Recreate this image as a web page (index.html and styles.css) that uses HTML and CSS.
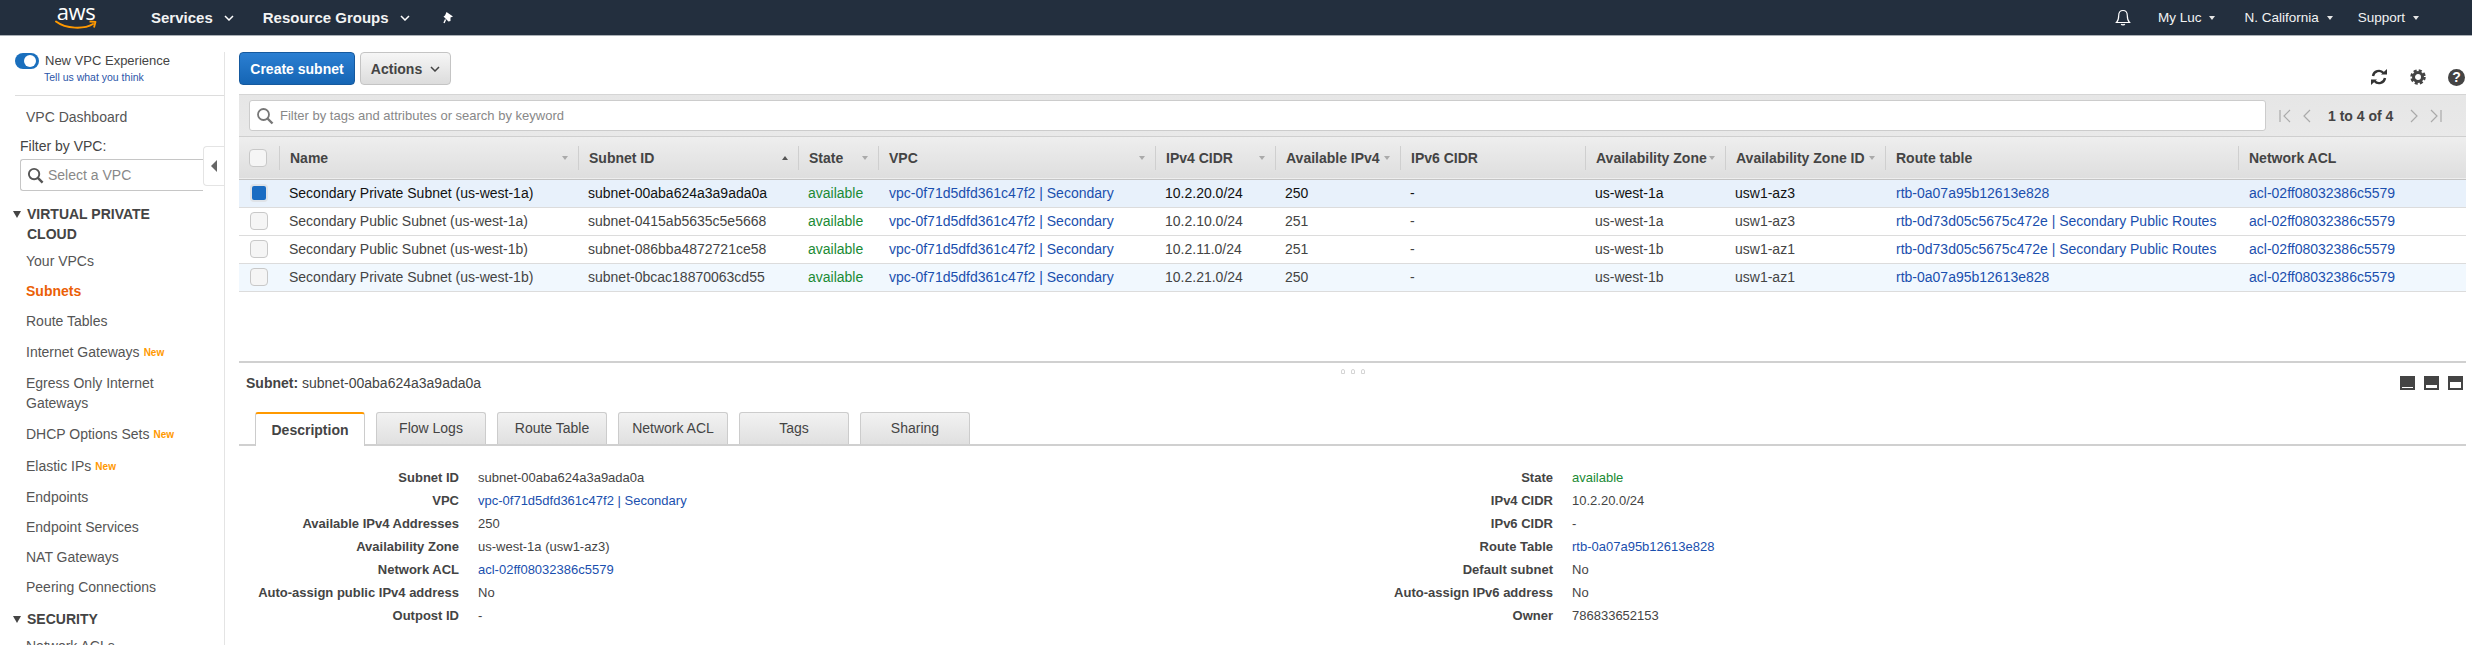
FILE: index.html
```html
<!DOCTYPE html>
<html lang="en">
<head>
    <meta charset="UTF-8">
    <title>Subnets | VPC Management Console</title>
    <link rel="stylesheet" href="styles.css">
</head>
<body>

    <!-- top bar -->
    <header class="topbar">
        <a class="logo" href="#">
            <span class="logo-text">aws</span>
            <svg class="logo-smile" viewBox="0 0 42 10" width="42" height="10"><path d="M1 1.5C11 9 29 9.500 38 4" fill="none" stroke="#f90" stroke-width="2" stroke-linecap="round"/><path d="M34.500 1.500L40.500 1.800L39 7.500" fill="none" stroke="#f90" stroke-width="1.800" stroke-linejoin="round"/></svg>
        </a>
        <a class="menu menu-services" href="#">Services<svg class="caret" viewBox="0 0 10 6" width="10" height="6"><path d="M1 1l4 4 4-4" fill="none" stroke="#fff" stroke-width="1.500"/></svg></a>
        <a class="menu menu-groups" href="#">Resource Groups<svg class="caret" viewBox="0 0 10 6" width="10" height="6"><path d="M1 1l4 4 4-4" fill="none" stroke="#fff" stroke-width="1.500"/></svg></a>
        <svg class="pin" viewBox="0 0 14 14" width="14" height="14"><path d="M5.500 1L12 5.500 9.500 6.500 9.500 10 7.500 10.500 2.500 5.500 4 4.500z" fill="#fff"/><path d="M4.500 8.500L3 12" stroke="#fff" stroke-width="1.400"/></svg>
        <div class="topbar-right">
            <svg class="bell" viewBox="0 0 18 18" width="18" height="18"><path d="M9 1.500c-3 0-4.300 2.300-4.300 5 0 3.500-.7 5.500-2.200 7h13c-1.500-1.500-2.200-3.500-2.200-7 0-2.700-1.300-5-4.300-5zM7.300 15c.3 1.200 3.100 1.200 3.400 0" fill="none" stroke="#fff" stroke-width="1.200"/></svg>
            <a class="menu-small menu-user" href="#">My Luc<span class="tiny-caret"></span></a>
            <a class="menu-small menu-region" href="#">N. California<span class="tiny-caret"></span></a>
            <a class="menu-small" href="#">Support<span class="tiny-caret"></span></a>
        </div>
    </header>

    <div class="page">

        <!-- left navigation -->
        <aside class="sidebar">
            <div class="experience">
                <div class="experience-row">
                    <span class="toggle"><span class="toggle-knob"></span></span>
                    <span>New VPC Experience</span>
                </div>
                <a class="feedback" href="#">Tell us what you think</a>
            </div>
            <a class="dashboard" href="#">VPC Dashboard</a>
            <div class="filter-label">Filter by VPC:</div>
            <div class="vpc-select">
                <svg viewBox="0 0 18 18" width="17" height="17"><circle cx="7.500" cy="7.500" r="5.500" fill="none" stroke="#555" stroke-width="2"/><path d="M11.500 11.500L16.500 16.500" stroke="#555" stroke-width="2.500"/></svg>
                <span>Select a VPC</span>
            </div>
            <div class="collapse-handle"><span class="collapse-arrow"></span></div>

            <div class="nav-heading"><span class="triangle"></span><span class="heading-text">VIRTUAL PRIVATE CLOUD</span></div>
            <ul class="nav-list">
                <li class="nav-item">Your VPCs</li>
                <li class="nav-item active">Subnets</li>
                <li class="nav-item">Route Tables</li>
                <li class="nav-item tall">Internet Gateways <span class="new">New</span></li>
                <li class="nav-item double">Egress Only Internet Gateways</li>
                <li class="nav-item tall">DHCP Options Sets <span class="new">New</span></li>
                <li class="nav-item tall">Elastic IPs <span class="new">New</span></li>
                <li class="nav-item">Endpoints</li>
                <li class="nav-item">Endpoint Services</li>
                <li class="nav-item">NAT Gateways</li>
                <li class="nav-item">Peering Connections</li>
            </ul>
            <div class="nav-heading security"><span class="triangle"></span><span class="heading-text">SECURITY</span></div>
            <ul class="nav-list">
                <li class="nav-item">Network ACLs</li>
            </ul>
        </aside>

        <main class="content">
            <div class="actions-bar">
                <button class="btn btn-primary">Create subnet</button>
                <button class="btn btn-default">Actions<svg class="caret" viewBox="0 0 10 6" width="10" height="6"><path d="M1 1l4 4 4-4" fill="none" stroke="#444" stroke-width="1.500"/></svg></button>
                <div class="tools">
                    <svg viewBox="0 0 18 18" width="18" height="18"><path d="M3 8a6 6 0 0 1 10.500-3M15 10a6 6 0 0 1-10.500 3" fill="none" stroke="#333" stroke-width="2.400"/><path d="M11 6.500h6V1zM7 11.500H1v5.500z" fill="#333"/></svg>
                    <svg viewBox="0 0 18 18" width="18" height="18"><circle cx="9" cy="9" r="4.500" fill="none" stroke="#444" stroke-width="3"/><circle cx="9" cy="9" r="6.500" fill="none" stroke="#444" stroke-width="2.500" stroke-dasharray="3 2.100"/></svg>
                    <span class="help">?</span>
                </div>
            </div>

            <div class="search-bar">
                <div class="search-box">
                    <svg viewBox="0 0 18 18" width="18" height="18"><circle cx="7.500" cy="7.500" r="5.500" fill="none" stroke="#777" stroke-width="1.800"/><path d="M11.500 11.500L16.500 16.500" stroke="#777" stroke-width="2.400"/></svg>
                    <span>Filter by tags and attributes or search by keyword</span>
                </div>
                <div class="pager">
                    <svg viewBox="0 0 14 14" width="14" height="14"><path d="M2 1v12M12 1L6 7l6 6" fill="none" stroke="#aaa" stroke-width="1.200"/></svg>
                    <svg viewBox="0 0 10 14" width="10" height="14"><path d="M8 1L2 7l6 6" fill="none" stroke="#aaa" stroke-width="1.200"/></svg>
                    <span class="pager-text">1 to 4 of 4</span>
                    <svg viewBox="0 0 10 14" width="10" height="14"><path d="M2 1l6 6-6 6" fill="none" stroke="#aaa" stroke-width="1.200"/></svg>
                    <svg viewBox="0 0 14 14" width="14" height="14"><path d="M12 1v12M2 1l6 6-6 6" fill="none" stroke="#aaa" stroke-width="1.200"/></svg>
                </div>
            </div>

            <div class="table-pane">
                <table class="grid">
                    <colgroup>
                        <col class="c-check"><col class="c-name"><col class="c-id"><col class="c-state"><col class="c-vpc"><col class="c-ipv4"><col class="c-avail"><col class="c-ipv6"><col class="c-az"><col class="c-azid"><col class="c-route"><col class="c-acl">
                    </colgroup>
                    <thead>
                        <tr>
                            <th><span class="check"></span></th>
                            <th><div class="th-in">Name<i class="sort"></i></div></th>
                            <th><div class="th-in">Subnet ID<i class="sort up"></i></div></th>
                            <th><div class="th-in">State<i class="sort"></i></div></th>
                            <th><div class="th-in">VPC<i class="sort"></i></div></th>
                            <th><div class="th-in">IPv4 CIDR<i class="sort"></i></div></th>
                            <th><div class="th-in">Available IPv4<i class="sort"></i></div></th>
                            <th><div class="th-in">IPv6 CIDR</div></th>
                            <th><div class="th-in">Availability Zone<i class="sort"></i></div></th>
                            <th><div class="th-in">Availability Zone ID<i class="sort"></i></div></th>
                            <th><div class="th-in">Route table</div></th>
                            <th><div class="th-in">Network ACL</div></th>
                        </tr>
                    </thead>
                    <tbody>
                        <tr class="selected">
                            <td><span class="check checked"></span></td>
                            <td>Secondary Private Subnet (us-west-1a)</td>
                            <td>subnet-00aba624a3a9ada0a</td>
                            <td class="ok">available</td>
                            <td class="link">vpc-0f71d5dfd361c47f2 | Secondary</td>
                            <td>10.2.20.0/24</td>
                            <td>250</td>
                            <td>-</td>
                            <td>us-west-1a</td>
                            <td>usw1-az3</td>
                            <td class="link">rtb-0a07a95b12613e828</td>
                            <td class="link">acl-02ff08032386c5579</td>
                        </tr>
                        <tr>
                            <td><span class="check"></span></td>
                            <td>Secondary Public Subnet (us-west-1a)</td>
                            <td>subnet-0415ab5635c5e5668</td>
                            <td class="ok">available</td>
                            <td class="link">vpc-0f71d5dfd361c47f2 | Secondary</td>
                            <td>10.2.10.0/24</td>
                            <td>251</td>
                            <td>-</td>
                            <td>us-west-1a</td>
                            <td>usw1-az3</td>
                            <td class="link">rtb-0d73d05c5675c472e | Secondary Public Routes</td>
                            <td class="link">acl-02ff08032386c5579</td>
                        </tr>
                        <tr>
                            <td><span class="check"></span></td>
                            <td>Secondary Public Subnet (us-west-1b)</td>
                            <td>subnet-086bba4872721ce58</td>
                            <td class="ok">available</td>
                            <td class="link">vpc-0f71d5dfd361c47f2 | Secondary</td>
                            <td>10.2.11.0/24</td>
                            <td>251</td>
                            <td>-</td>
                            <td>us-west-1b</td>
                            <td>usw1-az1</td>
                            <td class="link">rtb-0d73d05c5675c472e | Secondary Public Routes</td>
                            <td class="link">acl-02ff08032386c5579</td>
                        </tr>
                        <tr class="tinted">
                            <td><span class="check"></span></td>
                            <td>Secondary Private Subnet (us-west-1b)</td>
                            <td>subnet-0bcac18870063cd55</td>
                            <td class="ok">available</td>
                            <td class="link">vpc-0f71d5dfd361c47f2 | Secondary</td>
                            <td>10.2.21.0/24</td>
                            <td>250</td>
                            <td>-</td>
                            <td>us-west-1b</td>
                            <td>usw1-az1</td>
                            <td class="link">rtb-0a07a95b12613e828</td>
                            <td class="link">acl-02ff08032386c5579</td>
                        </tr>
                    </tbody>
                </table>
            </div>

            <!-- bottom panel -->
            <section class="detail-pane">
                <div class="split-dots"><i></i><i></i><i></i></div>
                <div class="detail-head">
                    <div><b>Subnet:</b> subnet-00aba624a3a9ada0a</div>
                    <div class="pane-icons">
                        <span class="pane-icon p1"></span>
                        <span class="pane-icon p2"></span>
                        <span class="pane-icon p3"></span>
                    </div>
                </div>
                <div class="tabs">
                    <a class="tab current" href="#">Description</a>
                    <a class="tab" href="#">Flow Logs</a>
                    <a class="tab" href="#">Route Table</a>
                    <a class="tab" href="#">Network ACL</a>
                    <a class="tab" href="#">Tags</a>
                    <a class="tab" href="#">Sharing</a>
                </div>
                <div class="details">
                    <dl class="detail-col">
                        <dt>Subnet ID</dt><dd>subnet-00aba624a3a9ada0a</dd>
                        <dt>VPC</dt><dd class="link">vpc-0f71d5dfd361c47f2 | Secondary</dd>
                        <dt>Available IPv4 Addresses</dt><dd>250</dd>
                        <dt>Availability Zone</dt><dd>us-west-1a (usw1-az3)</dd>
                        <dt>Network ACL</dt><dd class="link">acl-02ff08032386c5579</dd>
                        <dt>Auto-assign public IPv4 address</dt><dd>No</dd>
                        <dt>Outpost ID</dt><dd>-</dd>
                    </dl>
                    <dl class="detail-col">
                        <dt>State</dt><dd class="ok">available</dd>
                        <dt>IPv4 CIDR</dt><dd>10.2.20.0/24</dd>
                        <dt>IPv6 CIDR</dt><dd>-</dd>
                        <dt>Route Table</dt><dd class="link">rtb-0a07a95b12613e828</dd>
                        <dt>Default subnet</dt><dd>No</dd>
                        <dt>Auto-assign IPv6 address</dt><dd>No</dd>
                        <dt>Owner</dt><dd>786833652153</dd>
                    </dl>
                </div>
            </section>
        </main>
    </div>

</body>
</html>
```

FILE: styles.css
```css
html, body {
    margin: 0;
    padding: 0;
    height: 100%;
    overflow: hidden;
}

body {
    font-family: "Liberation Sans", Arial, sans-serif;
    font-size: 13px;
    color: #444;
    background-color: #fff;
}

a {
    color: inherit;
    text-decoration: none;
}

/* top bar */
.topbar {
    display: flex;
    align-items: center;
    height: 35px;
    border-bottom: 1px solid #aab0b6;
    background-color: #232f3e;
    color: #fff;
}

.logo {
    display: flex;
    flex-direction: column;
    align-items: center;
    width: 42px;
    margin-left: 55px;
    height: 35px;
}

.logo-text {
    font-family: "Open Sans", sans-serif;
    font-size: 22px;
    line-height: 20px;
    margin-top: 1px;
    letter-spacing: -0.5px;
}

.logo-smile {
    margin-top: -1px;
}

.menu {
    display: flex;
    align-items: center;
    font-size: 15px;
    font-weight: bold;
    color: #f2f3f3;
}

.menu .caret {
    margin-left: 11px;
}

.menu-services {
    margin-left: 54px;
}

.menu-groups {
    margin-left: 29px;
}

.pin {
    margin-left: 31px;
}

.topbar-right {
    display: flex;
    align-items: center;
    margin-left: auto;
    padding-right: 53px;
}

.bell {
    margin-right: 26px;
}

.menu-small {
    font-size: 13.500px;
    color: #f2f3f3;
}

.menu-user {
    margin-right: 29px;
}

.menu-region {
    margin-right: 25px;
}

.tiny-caret {
    display: inline-block;
    margin-left: 8px;
    vertical-align: 2px;
    border-left: 3.500px solid transparent;
    border-right: 3.500px solid transparent;
    border-top: 4px solid #e6e6e6;
}

/* sidebar */
.page {
    display: flex;
    height: 609px;
    overflow: hidden;
}

.sidebar {
    position: relative;
    flex: none;
    box-sizing: border-box;
    width: 225px;
    margin-top: 16px;
    border-right: 1px solid #e4e4e4;
    overflow: hidden;
    font-size: 14px;
    color: #555;
}

.experience {
    margin-left: 15px;
    height: 43px;
    border-bottom: 1px solid #ddd;
}

.experience-row {
    display: flex;
    align-items: center;
    gap: 6px;
    color: #444;
    font-size: 13px;
    line-height: 18px;
}

.toggle {
    display: block;
    box-sizing: border-box;
    width: 24px;
    height: 16px;
    padding: 2px 2px 2px 9px;
    border-radius: 8px;
    background-color: #1a6fbd;
}

.toggle-knob {
    display: block;
    width: 12px;
    height: 12px;
    border-radius: 50%;
    background-color: #fff;
}

.feedback {
    display: block;
    margin: 1px 0 0 29px;
    font-size: 10.500px;
    color: #2b55a8;
}

.dashboard {
    display: block;
    margin: 12px 0 0 26px;
    line-height: 18px;
}

.filter-label {
    margin: 11px 0 0 20px;
    line-height: 18px;
    color: #444;
}

.vpc-select {
    display: flex;
    align-items: center;
    gap: 4px;
    box-sizing: border-box;
    width: 183px;
    height: 32px;
    margin: 4px 0 0 20px;
    padding-left: 6px;
    border: 1px solid #c6c6c6;
    border-right: none;
    border-radius: 3px 0 0 3px;
    color: #888;
}

.collapse-handle {
    position: absolute;
    top: 94px;
    right: 0;
    display: flex;
    align-items: center;
    justify-content: center;
    box-sizing: border-box;
    width: 21px;
    height: 40px;
    border: 1px solid #e4e4e4;
    border-right: none;
    border-radius: 4px 0 0 4px;
    background-color: #fff;
}

.collapse-arrow {
    border-top: 6px solid transparent;
    border-bottom: 6px solid transparent;
    border-right: 6px solid #666;
}

.nav-heading {
    display: flex;
    gap: 6px;
    margin: 13px 8px 0 13px;
    font-size: 14px;
    font-weight: bold;
    line-height: 20px;
    color: #444;
}

.heading-text {
    max-width: 130px;
}

.nav-heading.security {
    margin-top: 7px;
}

.triangle {
    flex: none;
    width: 0;
    height: 0;
    margin-top: 7px;
    border-left: 4.500px solid transparent;
    border-right: 4.500px solid transparent;
    border-top: 7px solid #444;
}

.nav-list {
    list-style: none;
    margin: 0;
    padding: 2px 10px 0 26px;
}

.nav-item {
    display: flex;
    flex-wrap: wrap;
    align-items: center;
    gap: 0 4px;
    height: 30px;
    line-height: 20px;
}

.nav-item.tall {
    height: 32px;
}

.nav-item.double {
    height: 50px;
}

.nav-item.active {
    font-weight: bold;
    color: #eb5f07;
}

.new {
    font-size: 10px;
    font-weight: bold;
    color: #ff9900;
    margin-top: 2px;
}

/* main area */
.content {
    flex: 1;
    min-width: 0;
    margin: 0 6px 0 14px;
}

.actions-bar {
    display: flex;
    align-items: flex-start;
    gap: 5px;
    height: 58px;
    padding-top: 16px;
    box-sizing: border-box;
}

.btn {
    height: 33px;
    border-radius: 4px;
    font-family: inherit;
    font-size: 14px;
    font-weight: bold;
    padding: 0;
}

.btn-primary {
    width: 116px;
    border: 1px solid #15599e;
    background: linear-gradient(#2b7fd2, #1565b4);
    color: #fff;
}

.btn-default {
    display: flex;
    align-items: center;
    justify-content: center;
    gap: 8px;
    width: 91px;
    border: 1px solid #c4c4c4;
    background: linear-gradient(#f6f6f6, #dcdcdc);
    color: #444;
}

.tools {
    display: flex;
    align-items: center;
    gap: 21px;
    margin: 16px 1px 0 auto;
}

.help {
    display: block;
    width: 17px;
    height: 17px;
    border-radius: 50%;
    background-color: #444;
    color: #fff;
    font-size: 14px;
    font-weight: bold;
    line-height: 17px;
    text-align: center;
}

.search-bar {
    display: flex;
    align-items: center;
    box-sizing: border-box;
    height: 43px;
    padding-left: 10px;
    border-top: 1px solid #d5d5d5;
    border-bottom: 1px solid #cfcfcf;
    background: linear-gradient(#e6e6e6, #e9e9e9);
}

.search-box {
    display: flex;
    align-items: center;
    gap: 6px;
    box-sizing: border-box;
    flex: none;
    width: 2017px;
    height: 31px;
    padding-left: 6px;
    border: 1px solid #ccc;
    border-radius: 3px;
    background-color: #fff;
    font-size: 13px;
    color: #888;
}

.pager {
    display: flex;
    align-items: center;
    gap: 10px;
    margin-left: 12px;
}

.pager-text {
    margin: 0 6px;
    font-size: 14px;
    font-weight: bold;
    color: #444;
}

/* table */
.table-pane {
    height: 226px;
    border-bottom: 2px solid #d0d0d0;
    box-sizing: border-box;
}

.grid {
    width: 2227px;
    table-layout: fixed;
    border-collapse: collapse;
    font-size: 14px;
}

.c-check { width: 40px; }
.c-name { width: 299px; }
.c-id { width: 220px; }
.c-state { width: 80px; }
.c-vpc { width: 277px; }
.c-ipv4 { width: 120px; }
.c-avail { width: 125px; }
.c-ipv6 { width: 185px; }
.c-az { width: 140px; }
.c-azid { width: 160px; }
.c-route { width: 353px; }
.c-acl { width: 228px; }

.grid thead tr {
    height: 42px;
    background: linear-gradient(#eeeeee, #dedede);
    border-bottom: 1px solid #c4c4c4;
}

.grid th {
    padding: 0;
    text-align: left;
    font-weight: bold;
    color: #444;
}

.th-in {
    display: flex;
    align-items: center;
    justify-content: space-between;
    box-sizing: border-box;
    height: 24px;
    padding: 0 10px;
    border-left: 1px solid #cfcfcf;
    white-space: nowrap;
}

.sort {
    flex: none;
    border-left: 3.500px solid transparent;
    border-right: 3.500px solid transparent;
    border-top: 4px solid #aaa;
}

.sort.up {
    border-top: none;
    border-bottom: 4px solid #555;
}

.grid tbody tr {
    height: 28px;
    border-bottom: 1px solid #dcdcdc;
}

.grid td {
    padding: 0 0 0 10px;
    white-space: nowrap;
}

.grid td:first-child {
    padding-left: 11px;
}

.grid td.link {
    padding-left: 11px;
}

.selected {
    background-color: #e8f1fb;
    color: #111;
}

.tinted {
    background-color: #f1f8fe;
}

.check {
    display: block;
    box-sizing: border-box;
    width: 18px;
    height: 18px;
    border: 1px solid #c8c8c8;
    border-radius: 4px;
    background-color: #f5f5f5;
}

th .check {
    margin-left: 10px;
}

.check.checked {
    border: 2px solid #dfe3e8;
    background-color: #1a6cc2;
}

.link {
    color: #1a4fae;
}

.ok {
    color: #1a8a34;
}

/* details */
.detail-pane {
    position: relative;
}

.split-dots {
    position: absolute;
    top: 5px;
    left: 1102px;
    display: flex;
    gap: 6px;
}

.split-dots i {
    display: block;
    width: 2px;
    height: 3px;
    border: 1px solid #d4d4d4;
    border-radius: 2px 2px 0 0;
}

.detail-head {
    display: flex;
    align-items: center;
    justify-content: space-between;
    height: 38px;
    margin-top: 1px;
    padding: 0 3px 0 7px;
    font-size: 14px;
    color: #444;
}

.pane-icons {
    display: flex;
    gap: 9px;
}

.pane-icon {
    display: block;
    box-sizing: border-box;
    width: 15px;
    height: 14px;
    background-color: #444;
    position: relative;
}

.pane-icon::after {
    content: "";
    position: absolute;
    left: 2px;
    right: 2px;
    bottom: 2px;
    background-color: #fff;
}

.p1::after { height: 1px; }
.p2::after { height: 3px; }
.p3::after { height: 6px; }

.tabs {
    display: flex;
    gap: 11px;
    height: 32px;
    margin-top: 10px;
    padding-left: 16px;
    border-bottom: 2px solid #d0d0d0;
}

.tab {
    display: block;
    box-sizing: border-box;
    width: 110px;
    height: 32px;
    border: 1px solid #ccc;
    border-bottom: none;
    border-radius: 3px 3px 0 0;
    background: linear-gradient(#f2f2f2, #e0e0e0);
    font-size: 14px;
    line-height: 31px;
    text-align: center;
    color: #444;
}

.tab.current {
    height: 34px;
    border-top: 2px solid #ff9900;
    background: #fff;
    font-weight: bold;
    line-height: 33px;
}

.details {
    display: flex;
    padding-top: 20px;
}

.detail-col {
    display: grid;
    grid-template-columns: 220px auto;
    grid-auto-rows: 23px;
    column-gap: 19px;
    align-items: center;
    justify-content: start;
    flex: none;
    width: 1080px;
    margin: 0;
    font-size: 13px;
}

.detail-col:last-child {
    width: auto;
    grid-template-columns: 234px auto;
}

.detail-col dt {
    text-align: right;
    font-weight: bold;
    color: #444;
}

.detail-col dd {
    margin: 0;
}
```
